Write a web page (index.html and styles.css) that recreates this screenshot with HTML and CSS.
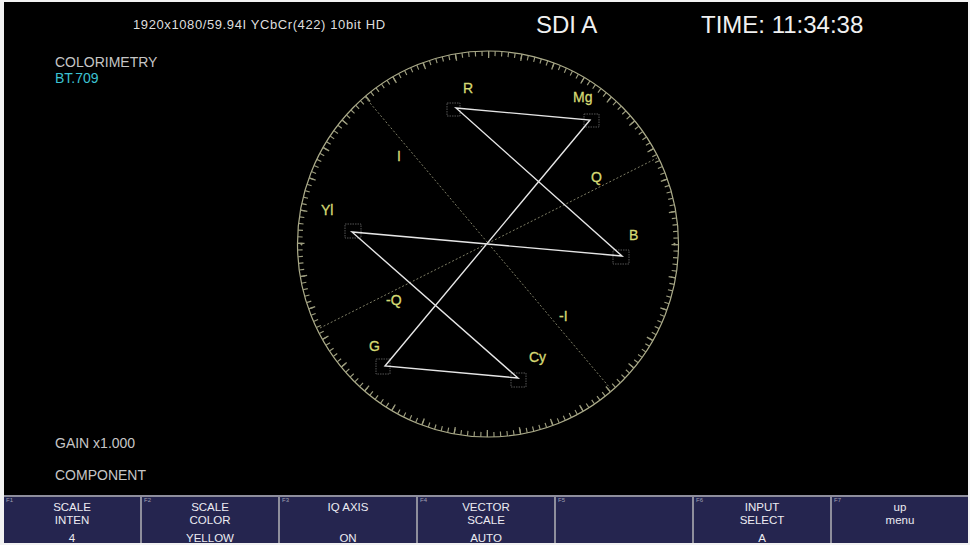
FILE: index.html
```html
<!DOCTYPE html>
<html>
<head>
<meta charset="utf-8">
<link rel="stylesheet" href="styles.css">
</head>
<body>
<div class="screen">
  <div class="view">
    <svg class="scope" width="964" height="493" viewBox="4 2 964 493" xmlns="http://www.w3.org/2000/svg">
      <!-- graticule -->
      <ellipse class="ring" cx="488" cy="244" rx="190.5" ry="193"/>
      <ellipse class="ticks" cx="488" cy="244" rx="188" ry="190.5" pathLength="360"/>
      <ellipse class="ticks-major" cx="488" cy="244" rx="187" ry="189.5" pathLength="360"/>
      <line class="axis" x1="365" y1="97" x2="610" y2="388"/>
      <line class="axis" x1="320" y1="328" x2="657" y2="158"/>
      <!-- target boxes -->
      <g class="box">
        <rect x="447" y="103" width="13" height="13"/>
        <rect x="584" y="114" width="15" height="13"/>
        <rect x="613" y="250" width="16" height="14"/>
        <rect x="511" y="373" width="15" height="14"/>
        <rect x="376" y="359" width="14" height="15"/>
        <rect x="345" y="224" width="16" height="14"/>
      </g>
      <!-- trace -->
      <polygon class="trace" points="456,108 590,120 385,366 518,378 352,232 622,256"/>
      <!-- labels -->
      <g class="lbl">
        <text x="463" y="93">R</text>
        <text x="573" y="102">Mg</text>
        <text x="591" y="182">Q</text>
        <text x="629" y="240">B</text>
        <text x="321" y="215">Yl</text>
        <text x="397" y="161">I</text>
        <text x="386" y="305">-Q</text>
        <text x="369" y="351">G</text>
        <text x="559" y="321">-I</text>
        <text x="529" y="362">Cy</text>
      </g>
    </svg>
    <div class="overlay">
      <div class="header">
        <span class="fmt">1920x1080/59.94I YCbCr(422) 10bit HD</span>
        <span class="big input">SDI A</span>
        <span class="big">TIME: 11:34:38</span>
      </div>
      <div class="info">
        <div>COLORIMETRY</div>
        <div class="cyan">BT.709</div>
      </div>
      <div class="info bottom">
        <div>GAIN x1.000</div>
        <div class="comp">COMPONENT</div>
      </div>
    </div>
  </div>
  <div class="fbar">
    <div class="fkey"><span class="fn">F1</span><div class="l1">SCALE</div><div class="l2">INTEN</div><div class="l3">4</div></div>
    <div class="fkey"><span class="fn">F2</span><div class="l1">SCALE</div><div class="l2">COLOR</div><div class="l3">YELLOW</div></div>
    <div class="fkey"><span class="fn">F3</span><div class="l1">IQ AXIS</div><div class="l2">&nbsp;</div><div class="l3">ON</div></div>
    <div class="fkey"><span class="fn">F4</span><div class="l1">VECTOR</div><div class="l2">SCALE</div><div class="l3">AUTO</div></div>
    <div class="fkey"><span class="fn">F5</span></div>
    <div class="fkey"><span class="fn">F6</span><div class="l1">INPUT</div><div class="l2">SELECT</div><div class="l3">A</div></div>
    <div class="fkey"><span class="fn">F7</span><div class="l1">up</div><div class="l2">menu</div></div>
  </div>
</div>
</body>
</html>
```

FILE: styles.css
```css
html, body {
  margin: 0;
  padding: 0;
  background: #f2f2f2;
}
body {
  width: 970px;
  height: 545px;
  overflow: hidden;
  font-family: "Liberation Sans", Arial, sans-serif;
}
.screen {
  margin: 2px 2px 0 4px;
  width: 964px;
  height: 541px;
  background: #000;
  display: flex;
  flex-direction: column;
  overflow: hidden;
}
.view {
  display: grid;
  height: 493px;
}
.scope, .overlay {
  grid-area: 1 / 1;
}
.scope {
  display: block;
}
.ring {
  fill: none;
  stroke: #acac8a;
  stroke-width: 1.2;
}
.ticks {
  fill: none;
  stroke: #9c9c7e;
  stroke-width: 5;
  stroke-dasharray: 0.35 1.65;
}
.ticks-major {
  fill: none;
  stroke: #9c9c7e;
  stroke-width: 7;
  stroke-dasharray: 0.4 9.6;
}
.axis {
  stroke: #7e7e66;
  stroke-width: 1;
  stroke-dasharray: 2 2;
}
.box rect {
  fill: none;
  stroke: #6a6a6a;
  stroke-width: 0.8;
  stroke-dasharray: 1.5 1;
}
.trace {
  fill: none;
  stroke: #e6e6e6;
  stroke-width: 1.4;
  stroke-linejoin: miter;
}
.lbl text {
  fill: #d6da74;
  font-family: "Liberation Sans", Arial, sans-serif;
  font-size: 14px;
  stroke: #d6da74;
  stroke-width: 0.3;
}
.overlay {
  display: flex;
  flex-direction: column;
  color: #c6c6c6;
}
.header {
  display: flex;
  align-items: flex-start;
  padding: 9px 0 0 129px;
  line-height: 27px;
}
.fmt {
  width: 403px;
  font-size: 13px;
  line-height: 15px;
  margin-top: 6px;
  letter-spacing: 0.6px;
  color: #dedede;
}
.big {
  font-size: 24px;
  color: #f0f0f0;
}
.input {
  width: 165px;
}
.info {
  margin: 16px 0 0 51px;
  font-size: 14px;
  line-height: 16px;
}
.cyan {
  color: #3cc2d2;
}
.info.bottom {
  margin-top: auto;
  padding-bottom: 12px;
}
.info.bottom .comp {
  margin-top: 16px;
}
.fbar {
  flex: 1;
  display: grid;
  grid-template-columns: repeat(7, 1fr);
  gap: 2px;
  padding-top: 2px;
  background: #8e8e9c;
}
.fkey {
  position: relative;
  background: #25254f;
  color: #ececf2;
  font-size: 11.5px;
  line-height: 13px;
  text-align: center;
  padding-top: 4px;
  overflow: hidden;
}
.fn {
  position: absolute;
  left: 2px;
  top: 0;
  font-size: 6px;
  line-height: 7px;
  color: #a0a0b4;
}
.l3 {
  margin-top: 5px;
}
```
